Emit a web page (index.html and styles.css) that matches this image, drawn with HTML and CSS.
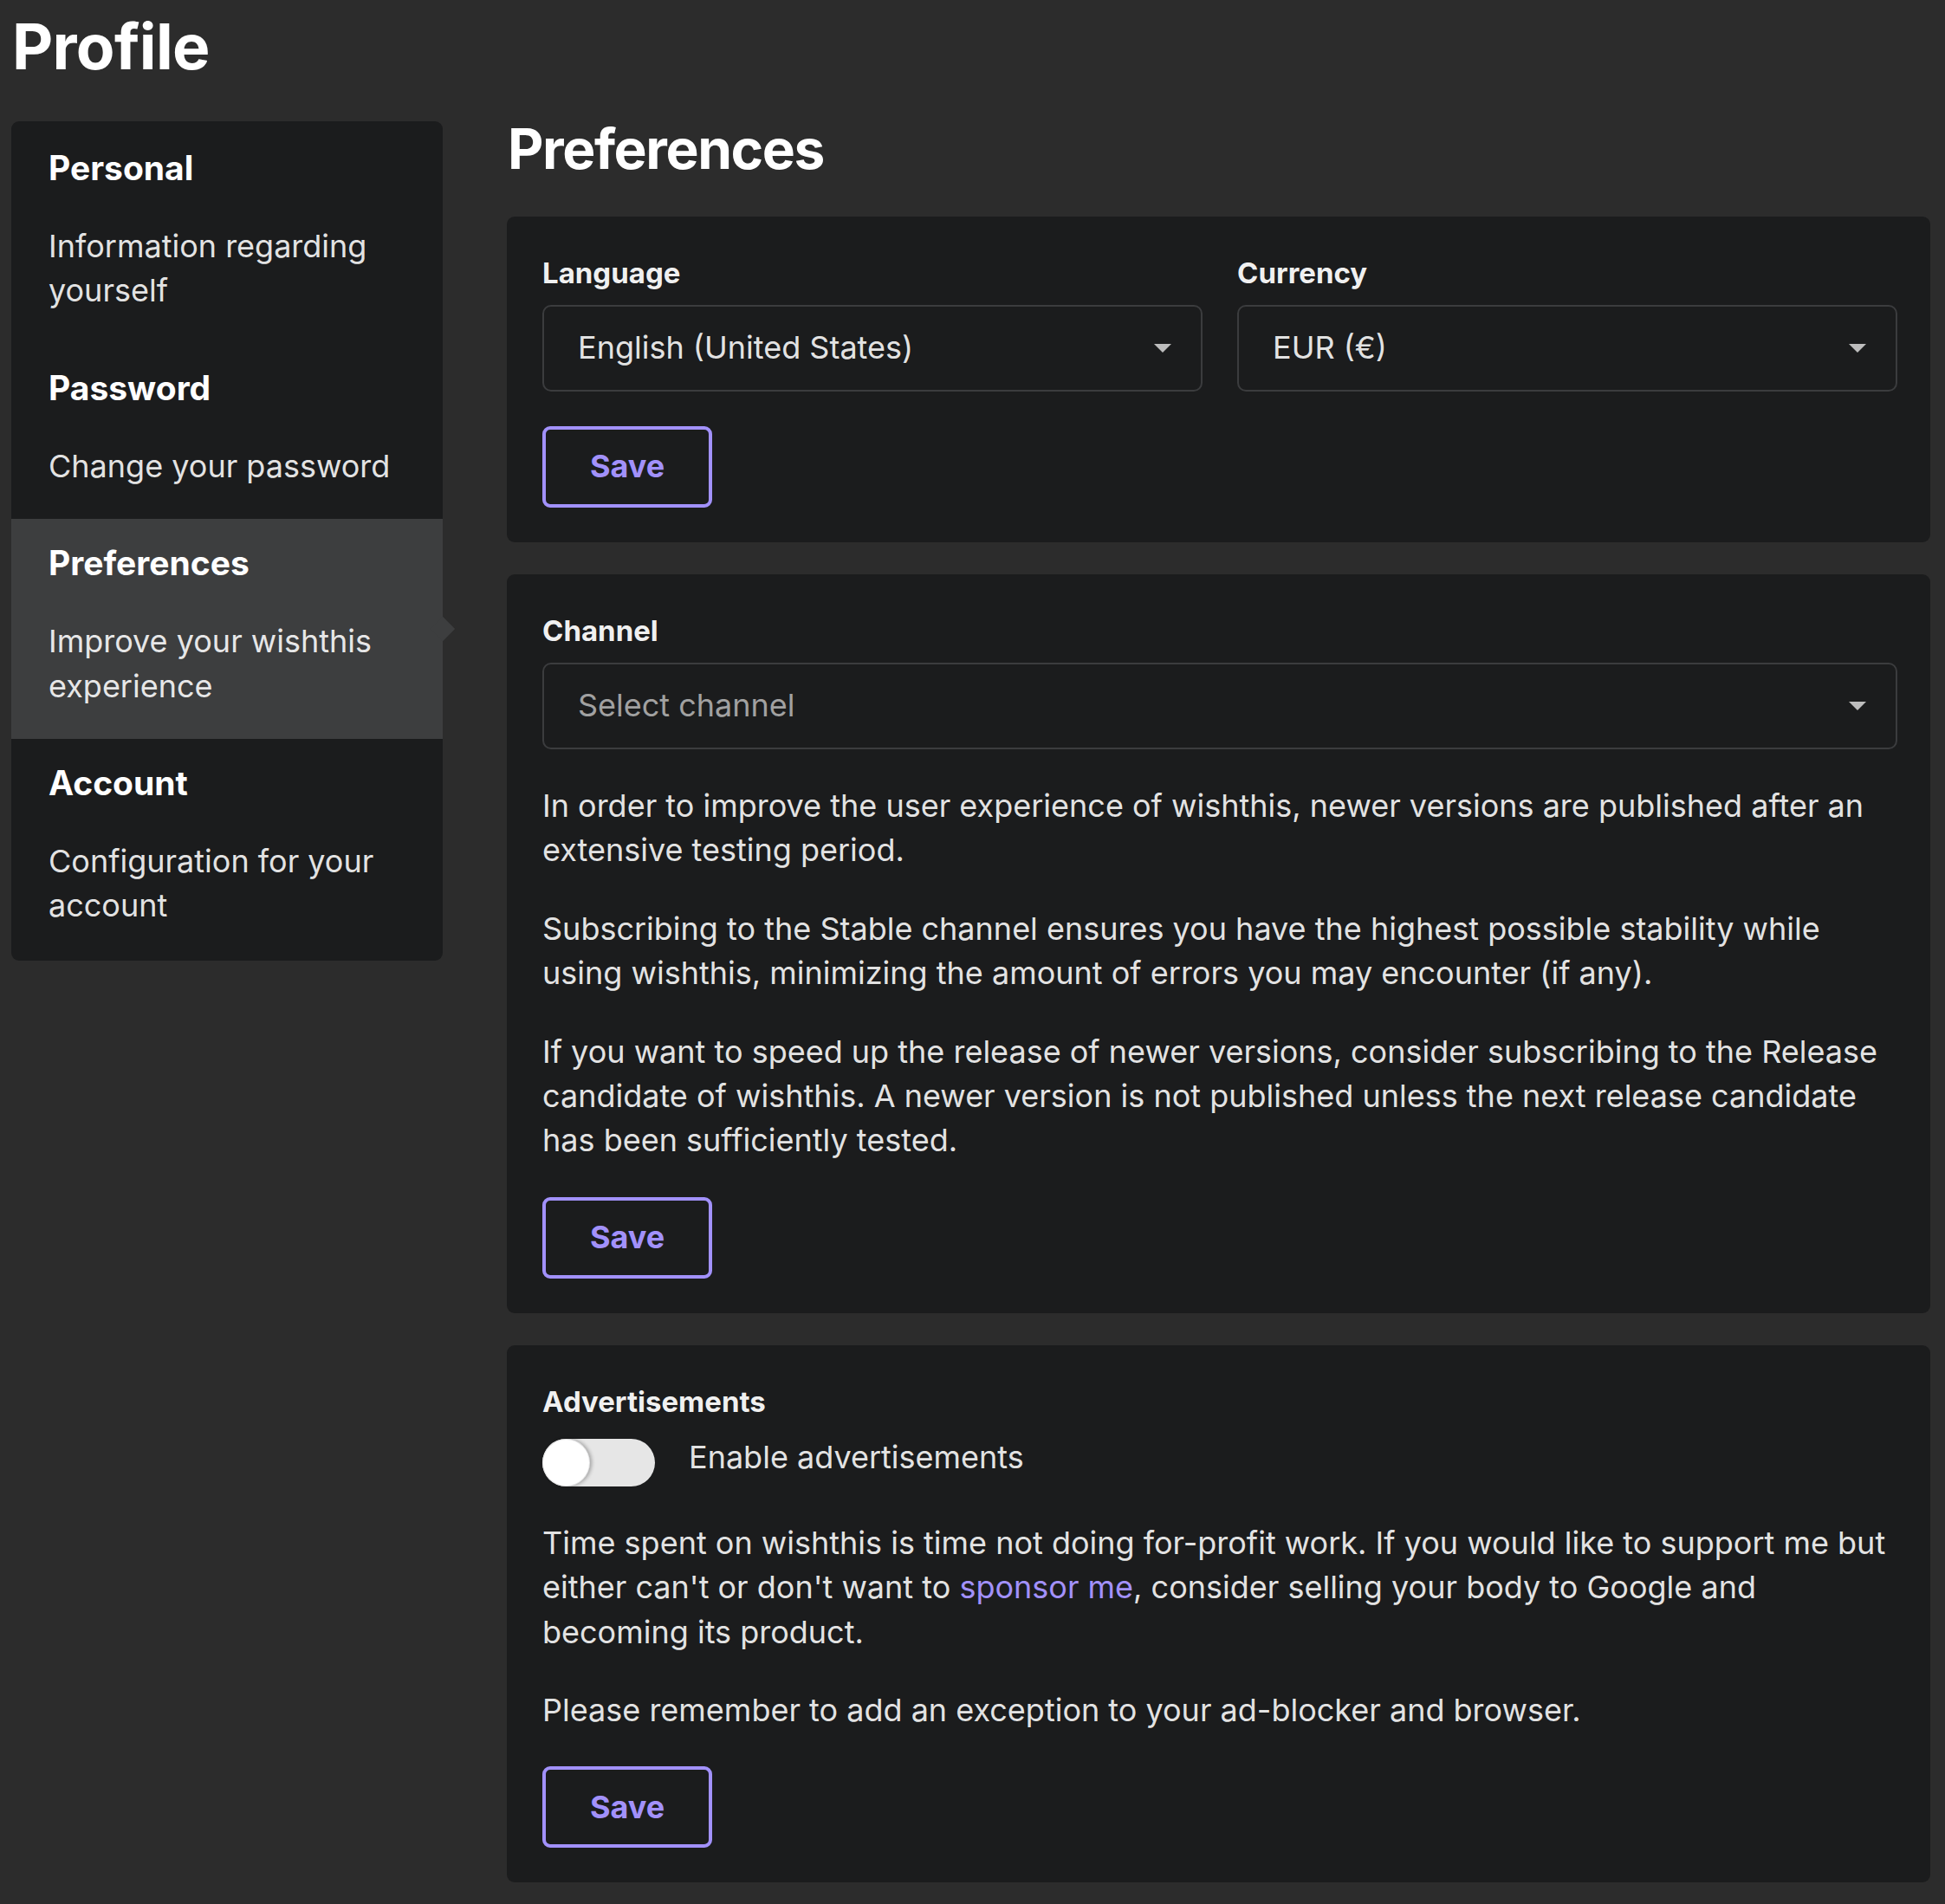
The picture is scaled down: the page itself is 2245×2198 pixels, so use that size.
FILE: index.html
```html
<!DOCTYPE html>
<html lang="en">
<head>
<meta charset="utf-8">
<title>Profile - wishthis</title>
<link rel="stylesheet" href="styles.css">
</head>
<body>
<main class="page">
  <h1 class="page-title">Profile</h1>
  <div class="layout">
    <nav class="side-menu">
      <a class="menu-item" href="#personal">
        <span class="menu-header">Personal</span>
        <span class="menu-desc">Information regarding yourself</span>
      </a>
      <a class="menu-item" href="#password">
        <span class="menu-header">Password</span>
        <span class="menu-desc">Change your password</span>
      </a>
      <a class="menu-item active" href="#preferences">
        <span class="menu-header">Preferences</span>
        <span class="menu-desc">Improve your wishthis experience</span>
      </a>
      <a class="menu-item" href="#account">
        <span class="menu-header">Account</span>
        <span class="menu-desc">Configuration for your account</span>
      </a>
    </nav>

    <section class="content">
      <h2 class="section-title">Preferences</h2>

      <form class="segment">
        <div class="two-fields">
          <div class="field">
            <label class="field-label">Language</label>
            <div class="dropdown">
              <span class="dropdown-text">English (United States)</span>
              <svg class="caret" width="20" height="10" viewBox="0 0 20 10"><path d="M0 0 H20 L10 10 Z" fill="#bdbdbd"/></svg>
            </div>
          </div>
          <div class="field">
            <label class="field-label">Currency</label>
            <div class="dropdown">
              <span class="dropdown-text">EUR (€)</span>
              <svg class="caret" width="20" height="10" viewBox="0 0 20 10"><path d="M0 0 H20 L10 10 Z" fill="#bdbdbd"/></svg>
            </div>
          </div>
        </div>
        <button class="btn" type="button">Save</button>
      </form>

      <form class="segment">
        <div class="field">
          <label class="field-label">Channel</label>
          <div class="dropdown">
            <span class="dropdown-text placeholder">Select channel</span>
            <svg class="caret" width="20" height="10" viewBox="0 0 20 10"><path d="M0 0 H20 L10 10 Z" fill="#bdbdbd"/></svg>
          </div>
        </div>
        <div class="text-block">
          <p>In order to improve the user experience of wishthis, newer versions are published after an extensive testing period.</p>
          <p>Subscribing to the Stable channel ensures you have the highest possible stability while using wishthis, minimizing the amount of errors you may encounter (if any).</p>
          <p>If you want to speed up the release of newer versions, consider subscribing to the Release candidate of wishthis. A newer version is not published unless the next release candidate has been sufficiently tested.</p>
        </div>
        <button class="btn" type="button">Save</button>
      </form>

      <form class="segment">
        <div class="field">
          <label class="field-label">Advertisements</label>
          <div class="toggle-row">
            <span class="toggle"><span class="knob"></span></span>
            <span class="toggle-label">Enable advertisements</span>
          </div>
        </div>
        <div class="text-block">
          <p>Time spent on wishthis is time not doing for-profit work. If you would like to support me but either can't or don't want to <a class="link" href="#sponsor">sponsor me</a>, consider selling your body to Google and becoming its product.</p>
          <p>Please remember to add an exception to your ad-blocker and browser.</p>
        </div>
        <button class="btn" type="button">Save</button>
      </form>
    </section>
  </div>
</main>
</body>
</html>
```

FILE: styles.css
```css
* { box-sizing: border-box; }
html, body { margin: 0; }
body {
  background: #2c2c2c;
  color: rgba(255, 255, 255, 0.9);
  font-family: Inter, "Open Sans", sans-serif;
  font-size: 36px;
  line-height: 51.4px;
}
.page { padding: 10px 17px 40px 13px; }
.page-title {
  margin: 0 0 32px 1px;
  font-size: 73px;
  line-height: 88px;
  font-weight: 700;
  letter-spacing: -0.7px;
  color: #fff;
}
.layout {
  display: grid;
  grid-template-columns: 498px 1fr;
  column-gap: 74px;
  align-items: start;
}
.side-menu {
  margin-top: 10px;
  background: #1b1c1d;
  border-radius: 9px;
  padding: 3px 0 2px;
  display: flex;
  flex-direction: column;
}
.menu-item {
  position: relative;
  display: block;
  padding: 27px 42px 35px 43px;
  text-decoration: none;
  color: rgba(255, 255, 255, 0.9);
}
.menu-header {
  display: block;
  font-size: 39px;
  line-height: 48px;
  font-weight: 700;
  color: #fff;
}
.menu-desc { display: block; margin-top: 41px; }
.menu-item.active { background: #3d3e3f; }
.menu-item.active::after {
  content: "";
  position: absolute;
  right: 0;
  top: 50%;
  width: 20px;
  height: 20px;
  background: #3d3e3f;
  transform: translate(50%, -50%) rotate(45deg);
}
.section-title {
  margin: 2px 0 39px 1px;
  font-size: 64px;
  line-height: 79px;
  font-weight: 700;
  letter-spacing: -1.4px;
  color: #fff;
}
.segment {
  background: #1b1c1d;
  border-radius: 9px;
  padding: 45px 38px 40px 41px;
  margin: 0 0 37px;
}
.two-fields {
  display: grid;
  grid-template-columns: 1fr 1fr;
  column-gap: 40px;
}
.field-label {
  display: block;
  font-size: 33px;
  line-height: 40px;
  font-weight: 700;
  color: rgba(255, 255, 255, 0.95);
  margin-bottom: 17px;
}
.dropdown {
  height: 100px;
  border: 2px solid #3b3c3e;
  border-radius: 10px;
  padding: 0 34px 0 39px;
  display: flex;
  align-items: center;
  justify-content: space-between;
}
.dropdown-text { color: rgba(255, 255, 255, 0.9); }
.dropdown-text.placeholder { color: #a1a1a1; }
.caret { display: block; }
.btn {
  display: block;
  margin-top: 40px;
  width: 196px;
  height: 94px;
  border: 4px solid #a291fb;
  border-radius: 9px;
  background: transparent;
  color: #a291fb;
  font-family: inherit;
  font-size: 36px;
  line-height: 51.4px;
  font-weight: 700;
  padding: 0;
}
.text-block { margin-top: 40px; max-width: 1556px; }
.text-block p { margin: 0 0 39px; }
.text-block + .btn { margin-top: 0; }
.toggle-row {
  display: flex;
  align-items: flex-start;
  gap: 39px;
  margin-top: 19px;
}
.toggle {
  position: relative;
  display: block;
  flex: none;
  width: 130px;
  height: 55px;
  margin-top: 4px;
  border-radius: 28px;
  background: #e6e6e6;
}
.knob {
  position: absolute;
  left: 0;
  top: 0;
  width: 55px;
  height: 55px;
  border-radius: 50%;
  background: #fff;
  box-shadow: 2px 0 4px rgba(0, 0, 0, 0.3), inset 0 0 0 1px rgba(34, 36, 38, 0.12);
}
.link { color: #a291fb; text-decoration: none; }
```
